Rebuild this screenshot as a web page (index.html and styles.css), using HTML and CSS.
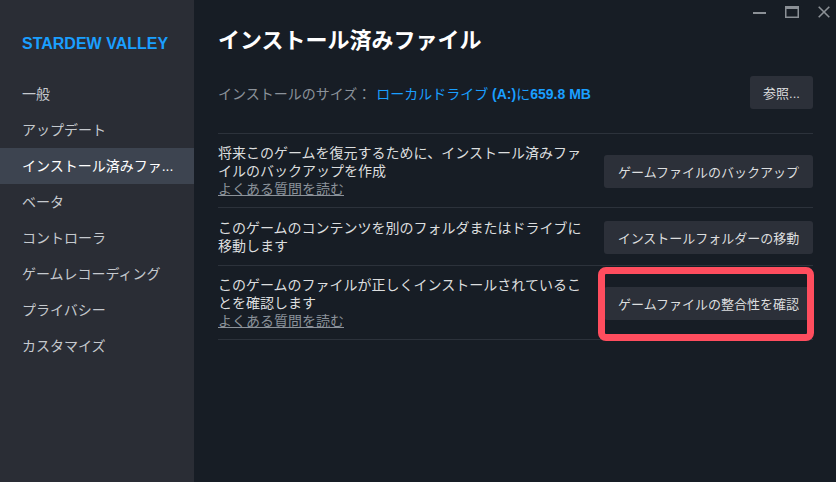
FILE: index.html
```html
<!DOCTYPE html>
<html lang="ja">
<head>
  <meta charset="UTF-8" />
  <meta name="viewport" content="width=device-width, initial-scale=1.0" />
  <title>インストール済みファイル</title>
  <link rel="stylesheet" href="styles.css">
</head>
<body>
  <div class="window">
    <aside class="sidebar">
      <div class="game-title">STARDEW VALLEY</div>
      <nav class="nav">
        <a class="nav-item">一般</a>
        <a class="nav-item">アップデート</a>
        <a class="nav-item active">インストール済みファ...</a>
        <a class="nav-item">ベータ</a>
        <a class="nav-item">コントローラ</a>
        <a class="nav-item">ゲームレコーディング</a>
        <a class="nav-item">プライバシー</a>
        <a class="nav-item">カスタマイズ</a>
      </nav>
    </aside>

    <main class="content">
      <div class="titlebar">
        <svg class="win-btn" width="13" height="12" viewBox="0 0 13 12">
          <rect x="0" y="6" width="13" height="2" fill="#8b9096"/>
        </svg>
        <svg class="win-btn" width="14" height="12" viewBox="0 0 14 12">
          <rect x="0.75" y="0.75" width="12.5" height="10.5" fill="none" stroke="#8b9096" stroke-width="1.5"/>
          <rect x="0" y="0" width="14" height="3" fill="#8b9096"/>
        </svg>
        <svg class="win-btn" width="12" height="12" viewBox="0 0 12 12">
          <path d="M0.7 0.7 L11.3 11.3 M11.3 0.7 L0.7 11.3" stroke="#8b9096" stroke-width="1.6"/>
        </svg>
      </div>

      <h1 class="page-title">インストール済みファイル</h1>

      <div class="size-row">
        <div class="size-info">
          <span class="size-label">インストールのサイズ：</span>
          <span class="size-value">ローカルドライブ <b>(A:)</b>に<b>659.8 MB</b></span>
        </div>
        <button class="btn btn-small">参照...</button>
      </div>

      <div class="list">
        <div class="row">
          <div class="row-text">
            将来このゲームを復元するために、インストール済みファイルのバックアップを作成
            <a class="faq">よくある質問を読む</a>
          </div>
          <div class="row-action">
            <button class="btn">ゲームファイルのバックアップ</button>
          </div>
        </div>
        <div class="row">
          <div class="row-text">
            このゲームのコンテンツを別のフォルダまたはドライブに移動します
          </div>
          <div class="row-action">
            <button class="btn">インストールフォルダーの移動</button>
          </div>
        </div>
        <div class="row">
          <div class="row-text">
            このゲームのファイルが正しくインストールされていることを確認します
            <a class="faq">よくある質問を読む</a>
          </div>
          <div class="row-action">
            <button class="btn">ゲームファイルの整合性を確認</button>
            <div class="highlight"></div>
          </div>
        </div>
      </div>
    </main>
  </div>
</body>
</html>
```

FILE: styles.css
```css
* {
  box-sizing: border-box;
}

html, body {
  margin: 0;
  height: 100%;
}

body {
  font-family: "Liberation Sans", "Noto Sans CJK JP", sans-serif;
  background: #171d25;
  color: #dcdedf;
}

.window {
  display: flex;
  height: 100%;
}

.sidebar {
  width: 194px;
  flex-shrink: 0;
  background: #2a2d35;
  padding-top: 34px;
}

.game-title {
  padding-left: 22px;
  font-size: 16px;
  line-height: 20px;
  font-weight: bold;
  color: #1a9fff;
}

.nav {
  margin-top: 22px;
  display: flex;
  flex-direction: column;
}

.nav-item {
  height: 36px;
  line-height: 36px;
  padding-left: 22px;
  font-size: 14px;
  color: #c5c9ce;
  white-space: nowrap;
  overflow: hidden;
}

.nav-item.active {
  background: #3d4450;
  color: #ffffff;
}

.content {
  flex: 1;
  padding: 0 23px 0 24px;
}

.titlebar {
  display: flex;
  justify-content: flex-end;
  gap: 19px;
  padding: 6px 0 0;
  margin-right: -17px;
  height: 18px;
}

.win-btn {
  display: block;
}

.page-title {
  margin: 9px 0 0;
  font-size: 22px;
  line-height: 28px;
  font-weight: bold;
  color: #ffffff;
}

.size-row {
  margin-top: 21px;
  display: flex;
  align-items: center;
  justify-content: space-between;
  height: 33px;
}

.size-info {
  font-size: 14px;
}

.size-label {
  color: #8b929a;
}

.size-value {
  color: #1a9fff;
  margin-left: 1px;
}

.size-value b {
  font-weight: bold;
}

.btn {
  font-family: inherit;
  font-size: 13px;
  color: #dcdedf;
  background: #2c3039;
  border: none;
  border-radius: 3px;
  height: 33px;
  width: 209px;
  padding: 0;
}

.btn-small {
  width: 63px;
}

.list {
  margin-top: 24px;
}

.row {
  display: flex;
  align-items: center;
  gap: 14px;
  min-height: 58px;
  padding: 10px 0 9px;
  border-top: 1px solid #2c323b;
}

.row:last-child {
  border-bottom: 1px solid #2c323b;
}

.row-text {
  flex: 1;
  font-size: 14px;
  line-height: 18px;
  color: #dcdedf;
}

.faq {
  display: block;
  color: #8b929a;
  text-decoration: underline;
}

.row-action {
  position: relative;
}

.row-action .btn {
  display: block;
}

.highlight {
  position: absolute;
  left: -6px;
  top: -20px;
  right: -1px;
  bottom: -21px;
  border: 7px solid #ff4d5e;
  border-radius: 8px;
}
```
